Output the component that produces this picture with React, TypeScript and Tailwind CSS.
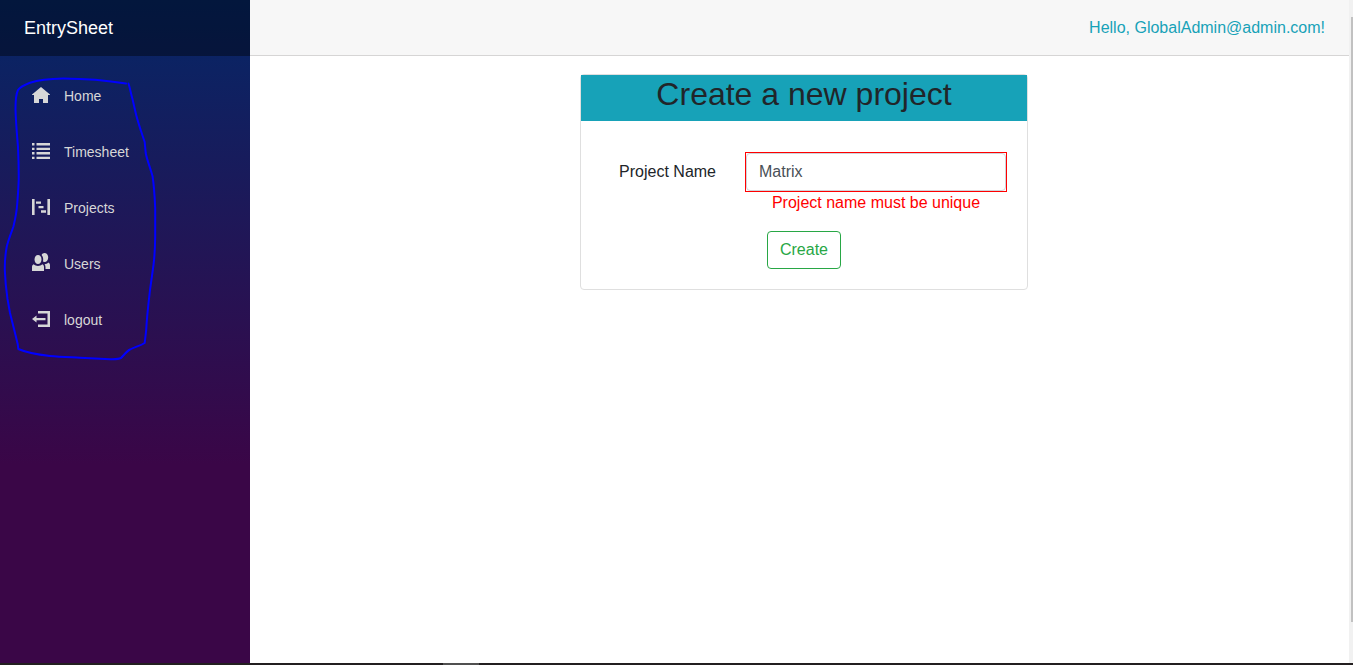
import { useState } from "react";

const navItems = [
  {
    label: "Home",
    path: "M9 2L0 9.5V10h2v8h5v-4h4v4h5v-8h2v-.5z",
  },
  {
    label: "Timesheet",
    path: "M0 2h2.500v2.400H0zM4.500 2H18v2.400H4.500zM0 6.800h2.500V9H0zM4.500 6.800H18V9H4.500zM0 11h2.500v2.400H0zM4.500 11H18v2.400H4.500zM0 15.800h2.500V18H0zM4.500 15.800H18V18H4.500z",
  },
  {
    label: "Projects",
    path: "M0 2h2.600v16H0zM15.400 2H18v16h-2.600zM4 4.400h5v2.400H4zM6.500 9h5v2.200h-5zM9 13.200h5v2.500H9z",
  },
  {
    label: "Users",
    path: "M12.6 0c-1.3 0-2.4.7-3 1.9 1 1.2 1.6 2.8 1.6 4.6 0 .7-.1 1.4-.3 2 .5.3 1.1.5 1.7.5 2 0 3.6-2 3.6-4.5S14.600 0 12.600 0zM6 2C4 2 2.500 4 2.500 6.400S4 11 6 11s3.500-2 3.500-4.600S8 2 6 2zM16.300 9.500c-.9 1.100-2.200 1.700-3.700 1.700.5.8.9 1.800.9 2.800v2H18v-3.800c0-1.200-.7-2.200-1.700-2.700zM1.700 11.300C.7 11.800 0 12.800 0 14v4h12v-4c0-1.200-.7-2.200-1.700-2.700-1.100 1.100-2.600 1.700-4.300 1.700s-3.200-.6-4.300-1.700z",
  },
  {
    label: "logout",
    path: "M6 2h12v16H6v-2.400h9.500V4.400H6zM4.500 6.500L0 10l4.500 3.500V11.200H13.500V8.900h-9z",
  },
];

function Sidebar() {
  return (
    <aside className="relative w-[250px] shrink-0 bg-[linear-gradient(180deg,rgb(5,39,103)_0%,#3a0647_70%)]">
      <div className="flex h-14 items-center bg-black/40 px-6">
        <a href="#" className="text-[18px] text-white">
          EntrySheet
        </a>
      </div>
      <nav className="flex flex-col gap-4 px-4 pt-5">
        {navItems.map((item) => (
          <a
            key={item.label}
            href="#"
            className="flex h-10 items-center gap-3.5 rounded px-4 text-sm text-[#d7d7d7]"
          >
            <svg viewBox="0 0 18 18" className="mb-1 size-[18px] fill-current" aria-hidden="true">
              <path d={item.path} />
            </svg>
            {item.label}
          </a>
        ))}
      </nav>
      {/* Freehand loop around the menu */}
      <svg
        viewBox="0 0 170 370"
        className="pointer-events-none absolute top-0 left-0 h-[370px] w-[170px]"
        fill="none"
        stroke="#0000ff"
        strokeWidth="2"
        strokeLinejoin="round"
        strokeLinecap="round"
        aria-hidden="true"
      >
        <path d="M126 83.5C105 80 84 78.5 63 78.4C50 78.6 38 80 30 82.7C24 85 20 87 18 90C16 94 15.5 102 15.5 109C15.8 122 17 135 18 147C18.6 160 18.8 170 18.7 180C18.4 190 17.8 197 17.3 203C16.8 211 15.8 217 13.3 227C10 236 8 241 6.7 247C5 256 4.7 262 4.8 270C5.2 282 6.5 292 7.5 299L10 313L15 333L17.7 344L18.3 349C25 352 37 354.5 50 356C60 357 70 357.2 80 357.7L110 359.2C115 359.4 119 359 121 358C124 355 127 351 130 349.5C134 347 140 346 144.7 343L146.2 330C147 315 148.5 303 150 290L153.500 265C154.8 254 155.100 245 155.200 237V208C154.6 195 154 185 152.5 176C150 167 147 160 145.7 153L144.7 142C141 131 137 120 135 110L132.5 99C131 94 130 88 128.5 83.5" />
      </svg>
    </aside>
  );
}

function ProjectForm() {
  const [name, setName] = useState("Matrix");
  return (
    <section className="w-full max-w-[448px] rounded border border-[#dfdfdf] bg-white">
      <h1 className="h-[46px] bg-[#17a2b8] text-center text-[32px] leading-[38px] text-[#212529]">
        Create a new project
      </h1>
      <form
        className="flex flex-col px-5 pt-[31px] pb-5"
        onSubmit={(event) => event.preventDefault()}
      >
        <div className="flex gap-[29px]">
          <label htmlFor="project-name" className="w-[115px] shrink-0 text-right leading-10">
            Project Name
          </label>
          <div className="min-w-0 flex-1">
            <div className="border border-[#ff0000]">
              <input
                id="project-name"
                type="text"
                value={name}
                onChange={(event) => setName(event.target.value)}
                aria-invalid="true"
                aria-describedby="project-name-error"
                className="block h-[38px] w-full rounded border border-[#ced4da] bg-white px-3 text-[#495057] outline-none"
              />
            </div>
            <p id="project-name-error" className="text-center leading-[22px] text-[#ff0000]">
              Project name must be unique
            </p>
          </div>
        </div>
        <button
          type="submit"
          className="mt-[17px] h-[38px] self-center rounded border border-[#28a745] px-3 text-[#28a745]"
        >
          Create
        </button>
      </form>
    </section>
  );
}

export default function App() {
  return (
    <div className="flex min-h-screen flex-col bg-white font-['Liberation_Sans',Arial,sans-serif] text-base text-[#212529]">
      <div className="flex flex-1">
        <Sidebar />
        <div className="flex min-w-0 flex-1 flex-col">
          <header className="flex h-14 items-center justify-end border-b border-[#d6d5d5] bg-[#f7f7f7] pr-6 pl-8">
            <a href="#" className="text-[#17a2b8]">
              Hello, GlobalAdmin@admin.com!
            </a>
          </header>
          <main className="flex justify-center pt-[18px] pr-[23px] pl-8">
            <ProjectForm />
          </main>
        </div>
        <div className="flex w-1 shrink-0 justify-end bg-[#f1f1f1] pt-[17px] pb-[41px]" aria-hidden="true">
          <div className="w-0.5 bg-[#c1c1c1]" />
        </div>
      </div>
      <div className="flex h-0.5 bg-[#231f20] pl-[443px]" aria-hidden="true">
        <div className="w-9 bg-[#505050]" />
      </div>
    </div>
  );
}
